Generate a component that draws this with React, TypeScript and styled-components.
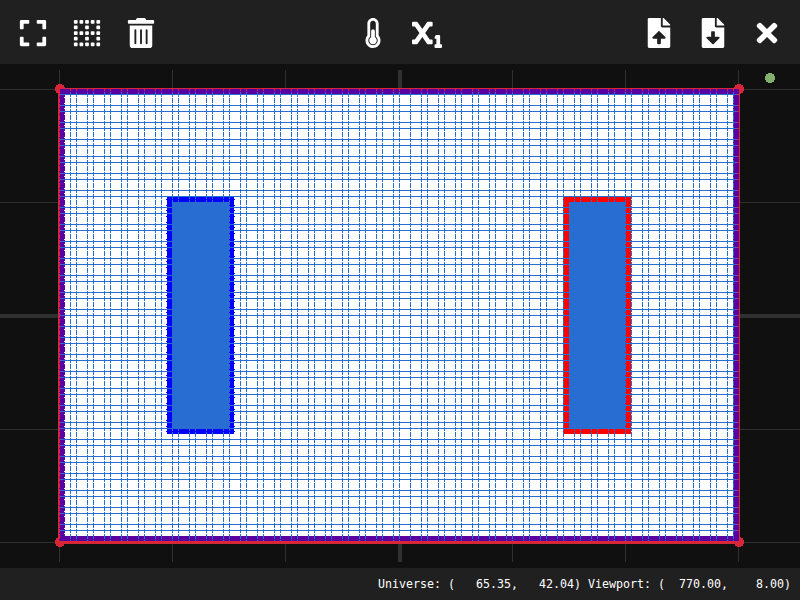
import React from "react";
import styled, { createGlobalStyle } from "styled-components";
import {
  FaExpand,
  FaBorderNone,
  FaTrashAlt,
  FaThermometerHalf,
  FaSubscript,
  FaFileUpload,
  FaFileDownload,
  FaTimes,
} from "react-icons/fa";

const GlobalStyle = createGlobalStyle`
  body {
    margin: 0;
    background: #101010;
    overflow: hidden;
  }
`;

const Page = styled.div`
  display: flex;
  flex-direction: column;
  width: 800px;
  height: 600px;
  background: #101010;
`;

const Toolbar = styled.header`
  display: grid;
  grid-template-columns: 1fr auto 1fr;
  height: 64px;
  padding: 0 6px;
  box-sizing: border-box;
  background: #202020;
`;

const ToolGroup = styled.div<{ $end?: boolean }>`
  display: flex;
  justify-content: ${(p) => (p.$end ? "flex-end" : "flex-start")};
`;

const ToolButton = styled.button`
  display: flex;
  justify-content: center;
  width: 54px;
  height: 64px;
  padding: 18px 0 0;
  border: 0;
  background: none;
  color: #fff;
  font-size: 30px;
`;

const Workspace = styled.main`
  flex: 1;
  padding: 6px 0;
`;

const Drawing = styled.svg`
  display: block;
`;

const StatusBar = styled.footer`
  display: flex;
  align-items: center;
  justify-content: flex-end;
  height: 32px;
  padding-right: 9px;
  box-sizing: border-box;
  background: #202020;
  color: #fff;
  font-family: "DejaVu Sans Mono", monospace;
  font-size: 11.63px;
  line-height: 32px;
  white-space: pre;
`;

const series = (start: number, end: number, step = 17) => {
  const out: number[] = [];
  for (let v = start; v <= end; v += step) out.push(v);
  return out;
};

const columns = [
  ...series(70, 393),
  ...series(76, 399),
  410,
  ...series(421, 727),
  ...series(427, 733),
];
const rows = [
  ...series(94, 315),
  ...series(105, 326),
  ...series(337, 524),
  ...series(343, 530),
];
const corners = [
  [60, 89],
  [739, 89],
  [739, 542],
  [60, 542],
];

const BLUE = "#286ed2";
const RED = "#d72638";
const PURPLE = "#5a00a0";

const CELL = 17 / 3;

// One-pixel marks at the middle of every mesh cell between two heights.
function CellMarks({ x, from, to, color }: { x: number; from: number; to: number; color: string }) {
  const marks: number[] = [];
  for (let y = 91.33; y < to; y += CELL) {
    if (y >= from) marks.push(Math.round(y));
  }
  return (
    <g fill={color}>
      {marks.map((y) => (
        <rect key={y} x={x} y={y} width={1} height={1} />
      ))}
    </g>
  );
}

function Plot() {
  return (
    <Drawing width="800" height="492" viewBox="0 70 800 492">
      <g shapeRendering="crispEdges" fill="#303030">
        {[59, 172, 285, 512, 625, 738].map((x) => (
          <rect key={x} x={x} y={70} width={1} height={492} />
        ))}
        {[89, 202, 429, 542].map((y) => (
          <rect key={y} x={0} y={y} width={800} height={1} />
        ))}
        <rect x={398} y={70} width={4} height={492} />
        <rect x={0} y={314} width={800} height={4} />
      </g>
      <g fill={RED} shapeRendering="crispEdges">
        {corners.map(([x, y]) => (
          <circle key={`${x}-${y}`} cx={x} cy={y} r={5} />
        ))}
      </g>
      <g shapeRendering="crispEdges">
        <rect x={58} y={88} width={682} height={456} fill={RED} />
        <rect x={60} y={89} width={679} height={452} fill={PURPLE} />
        <rect x={65} y={94} width={668} height={442} fill="#fff" />
        <rect x={167} y={197} width={67} height={237} fill="#0000ff" />
        <rect x={172} y={202} width={57} height={227} fill={BLUE} />
        <rect x={563} y={197} width={68} height={237} fill="#ff0000" />
        <rect x={569} y={202} width={56} height={227} fill={BLUE} />
        {columns.map((x) => (
          <line
            key={x}
            x1={x + 0.5}
            x2={x + 0.5}
            y1={89}
            y2={541}
            stroke={BLUE}
            strokeDasharray="4.6667 1"
            strokeDashoffset={2.34}
          />
        ))}
        {columns.map((x) => (
          <rect key={x} x={x} y={89} width={1} height={2} fill={RED} />
        ))}
        {rows.map((y) => (
          <line key={y} x1={60} x2={737} y1={y + 0.5} y2={y + 0.5} stroke={BLUE} />
        ))}
        {rows.map((y) => (
          <rect key={y} x={737} y={y} width={2} height={1} fill={RED} />
        ))}
        <CellMarks x={59} from={94} to={541} color={PURPLE} />
        <CellMarks x={64} from={95} to={536} color="#fff" />
        <CellMarks x={166} from={198} to={433} color="#0000ff" />
        <CellMarks x={234} from={198} to={433} color="#0000ff" />
      </g>
      <circle cx={770} cy={78} r={5} fill="#82af6b" shapeRendering="crispEdges" />
    </Drawing>
  );
}

export default function App() {
  return (
    <Page>
      <GlobalStyle />
      <Toolbar>
        <ToolGroup>
          <ToolButton aria-label="Fit view"><FaExpand /></ToolButton>
          <ToolButton aria-label="Grid"><FaBorderNone /></ToolButton>
          <ToolButton aria-label="Delete"><FaTrashAlt /></ToolButton>
        </ToolGroup>
        <ToolGroup>
          <ToolButton aria-label="Temperature"><FaThermometerHalf /></ToolButton>
          <ToolButton aria-label="Variables"><FaSubscript /></ToolButton>
        </ToolGroup>
        <ToolGroup $end>
          <ToolButton aria-label="Upload"><FaFileUpload /></ToolButton>
          <ToolButton aria-label="Download"><FaFileDownload /></ToolButton>
          <ToolButton aria-label="Close"><FaTimes /></ToolButton>
        </ToolGroup>
      </Toolbar>
      <Workspace>
        <Plot />
      </Workspace>
      <StatusBar>{"Universe: (   65.35,   42.04) Viewport: (  770.00,    8.00)"}</StatusBar>
    </Page>
  );
}
